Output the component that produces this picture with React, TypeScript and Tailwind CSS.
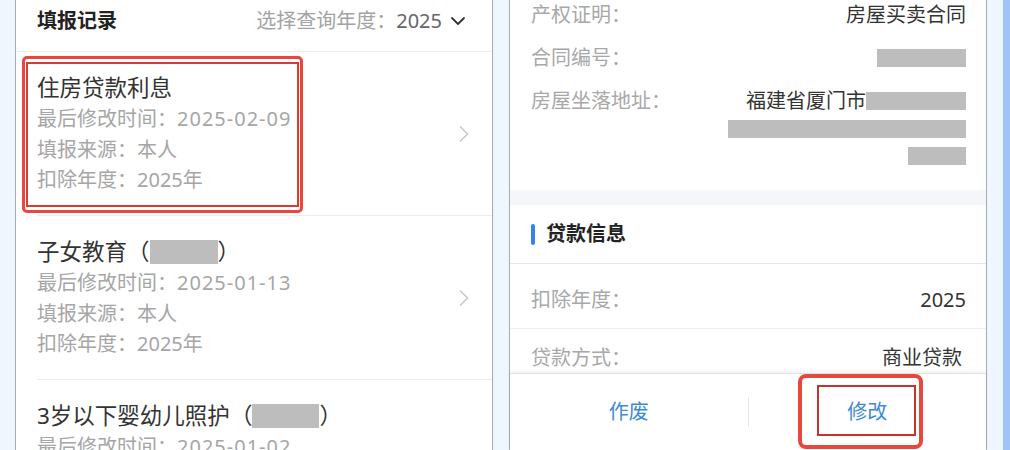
import { ChevronDown, ChevronRight } from 'lucide-react';

const font = { fontFamily: '"Noto Sans", "Noto Sans CJK SC", sans-serif' };

type Record = {
  title: string;
  redactW?: number;
  time: string;
};

const records: Record[] = [
  { title: '住房贷款利息', time: '2025-02-09' },
  { title: '子女教育', redactW: 68, time: '2025-01-13' },
  { title: '3岁以下婴幼儿照护', redactW: 67, time: '2025-01-02' },
];

const Redact = ({ w, h = 18 }: { w: number; h?: number }) => (
  <span className="inline-block bg-[#bdbdbd]" style={{ width: w, height: h }} />
);

const RecordItem = ({ item }: { item: Record }) => (
  <div className="relative h-[164px] pl-[21px]">
    <div className="flex h-full items-center border-b border-[#ececec] pr-[14px]">
      <div className="flex-1 self-start pt-5">
        <div className="flex h-[32px] items-center text-[22.5px] text-[#333]">
          {item.title}
          {item.redactW && (
            <>
              <span>（</span>
              <Redact w={item.redactW} h={24} />
              <span>）</span>
            </>
          )}
        </div>
        <div className="text-[20px] leading-[30.5px] text-[#a6a6a6]">
          <p>
            最后修改时间：<span className="tracking-[1px]">{item.time}</span>
          </p>
          <p>填报来源：本人</p>
          <p>扣除年度：2025年</p>
        </div>
      </div>
      <ChevronRight className="h-[28px] w-[28px] text-[#c9c9c9]" strokeWidth={1.4} />
    </div>
  </div>
);

const InfoRow = ({ label, children }: { label: string; children: React.ReactNode }) => (
  <div className="flex items-start justify-between">
    <span className="text-[20px] leading-[30px] text-[#a8a8a8]">{label}</span>
    {children}
  </div>
);

const App = () => {
  return (
    <div className="flex h-[450px] w-[1010px] overflow-hidden bg-[#eff6fd]" style={font}>
      {/* 填报记录 */}
      <div className="relative ml-[15px] w-[478px] border-x border-[#a5abb2] bg-white">
        <div className="flex h-[52px] items-start justify-between border-b border-[#efefef] pl-[21px] pr-[22px] pt-[7px]">
          <span className="text-[20px] font-bold leading-[28px] text-[#222]">填报记录</span>
          <div className="flex items-center text-[20px] leading-[28px]">
            <span className="text-[#a3a3a3]">选择查询年度：</span>
            <span className="text-[#666]">2025</span>
            <ChevronDown className="ml-[4px] h-[24px] w-[24px] text-[#333]" strokeWidth={1.8} />
          </div>
        </div>
        {records.map((r) => (
          <RecordItem key={r.title} item={r} />
        ))}
        <div className="absolute left-[6px] top-[56px] h-[157px] w-[281px] rounded-[5px] border-[3px] border-[#e8473d]" />
        <div className="absolute left-[10px] top-[62px] h-[145px] w-[273px] border-2 border-[#dc3b31]" />
      </div>

      {/* 详情 */}
      <div className="ml-[16px] flex w-[478px] flex-col border-x border-[#a5abb2] bg-white">
        <div className="flex-1 overflow-hidden">
          <div className="flex h-[190px] flex-col gap-[13px] pl-[21px] pr-[20px]">
            <InfoRow label="产权证明：">
              <span className="text-[20px] leading-[30px] text-[#333]">房屋买卖合同</span>
            </InfoRow>
            <InfoRow label="合同编号：">
              <div className="flex h-[30px] items-center">
                <Redact w={89} />
              </div>
            </InfoRow>
            <InfoRow label="房屋坐落地址：">
              <div className="flex flex-col items-end">
                <div className="flex h-[30px] items-center text-[20px] text-[#333]">
                  福建省厦门市
                  <Redact w={100} />
                </div>
                <div className="flex h-[26px] items-center">
                  <Redact w={238} />
                </div>
                <div className="flex h-[28px] items-center">
                  <Redact w={58} />
                </div>
              </div>
            </InfoRow>
          </div>
          <div className="h-[15px] bg-[#f4f6f9]" />
          <div className="flex h-[59px] items-center border-b border-[#e8e8e8] pl-[21px]">
            <span className="mr-[11px] h-[21px] w-[4px] rounded-full bg-[#2f86e8]" />
            <span className="text-[20px] font-bold text-[#222]">贷款信息</span>
          </div>
          <div className="border-b border-[#efefef] pl-[21px] pr-[20px] pt-[21px] pb-[13px]">
            <InfoRow label="扣除年度：">
              <span className="text-[20px] leading-[30px] text-[#333]">2025</span>
            </InfoRow>
          </div>
          <div className="pl-[21px] pr-[24px] pt-[14px]">
            <InfoRow label="贷款方式：">
              <span className="text-[20px] leading-[30px] text-[#333]">商业贷款</span>
            </InfoRow>
          </div>
        </div>
        <div className="relative flex h-[77px] items-center border-t border-[#e3e3e3] bg-white shadow-[0_-2px_4px_rgba(0,0,0,0.06)]">
          <div className="flex flex-1 justify-center text-[20px] text-[#3d8ad6]">作废</div>
          <div className="h-[30px] w-px bg-[#e6e6e6]" />
          <div className="flex flex-1 justify-center text-[20px] text-[#3d8ad6]">修改</div>
          <div className="absolute left-[288px] top-0 h-[75px] w-[125px] rounded-[8px] border-[4px] border-[#e8473d]" />
          <div className="absolute left-[307px] top-[11px] h-[51px] w-[99px] border-2 border-[#c8322a]" />
        </div>
      </div>

      <div className="ml-[16px] flex-1" />
      <div className="w-[7px] bg-[#a0c4f7]" />
    </div>
  );
};

export default App;
